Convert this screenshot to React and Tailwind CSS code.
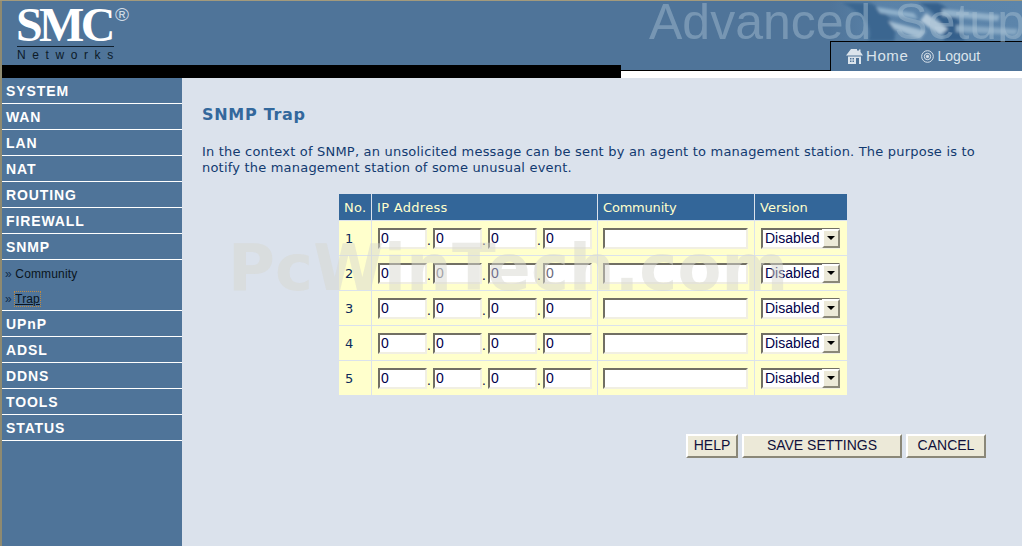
const menuTop = ["SYSTEM","WAN","LAN","NAT","ROUTING","FIREWALL","SNMP"];
const menuBottom = ["UPnP","ADSL","DDNS","TOOLS","STATUS"];
const sans = "font-['DejaVu_Sans',sans-serif]";
const inset = "border-2 border-t-[#716f64] border-l-[#716f64] border-b-[#f1efe2] border-r-[#f1efe2] bg-white";

function MenuItem({ label }) {
  return (
    <div className="h-[26px] border-b border-white pl-[4px] pt-[5px] text-[14px] leading-[16px] font-bold tracking-[0.9px] text-white font-['Liberation_Sans',sans-serif]">
      {label}
    </div>
  );
}

function Octet({ faded }) {
  return (
    <input
      readOnly
      defaultValue="0"
      className={`h-[21px] w-[49px] pl-[1px] text-[14px] leading-[17px] outline-none font-['Liberation_Sans',sans-serif] ${inset} ${faded ? "text-[#6a6a7a]" : "text-[#00004a]"}`}
    />
  );
}

function Dot() {
  return <span className="flex h-[22px] w-[6px] items-end text-[12px] leading-[15px] text-[#00004a]">.</span>;
}

function Row({ n, faded }) {
  return (
    <div className="grid h-[35px] grid-cols-[33px_226px_157px_92px] border-b border-[#dbe2ec] bg-[#ffffcc] text-[13px] text-[#0b2a5c]">
      <div className={`flex items-center border-r border-[#dbe2ec] pt-[1px] pl-[6px] ${sans}`}>{n}</div>
      <div className="flex items-center border-r border-[#dbe2ec] pl-[6px]">
        <Octet />
        <Dot />
        <Octet faded={faded} />
        <Dot />
        <Octet />
        <Dot />
        <Octet faded={faded} />
      </div>
      <div className="flex items-center border-r border-[#dbe2ec] pl-[5px]">
        <input readOnly className={`h-[21px] w-[145px] outline-none ${inset}`} />
      </div>
      <div className="flex items-center pl-[6px]">
        <div className={`flex h-[21px] w-[79px] items-center justify-between ${inset}`}>
          <span className="pl-[2px] text-[14px] leading-[17px] text-[#00004a] font-['Liberation_Sans',sans-serif]">Disabled</span>
          <span className="-mr-[2px] flex h-[19px] w-[18px] shrink-0 items-center justify-center border-2 border-t-white border-l-white border-r-[#8a8778] border-b-[#8a8778] bg-[#ece9d8]">
            <svg width="8" height="4" viewBox="0 0 8 4"><path d="M0 0h8L4 4z" fill="#000" /></svg>
          </span>
        </div>
      </div>
    </div>
  );
}

function Btn({ label, className }) {
  return (
    <button className={`h-[24px] border-2 border-t-white border-l-white border-r-[#8a8778] border-b-[#8a8778] bg-[#ece9d8] pb-[2px] text-[14px] leading-[16px] text-[#10103a] font-['Liberation_Sans',sans-serif] ${className}`}>
      {label}
    </button>
  );
}

function Photo() {
  return (
    <svg width="192" height="40" viewBox="0 0 192 40" className="block">
      <defs>
        <linearGradient id="fade" x1="0" x2="1" y1="0" y2="0">
          <stop offset="0" stopColor="#4f7499" />
          <stop offset="0.25" stopColor="#5a82a8" />
          <stop offset="1" stopColor="#5c85ab" />
        </linearGradient>
        <filter id="soft"><feGaussianBlur stdDeviation="1.4" /></filter>
      </defs>
      <rect width="192" height="40" fill="url(#fade)" />
      <g filter="url(#soft)">
        <path d="M12 2 C34 12 44 28 38 40 L64 40 C70 24 54 8 40 2z" fill="#3a6690" />
        <path d="M46 6 L84 12 L88 18 L50 12z" fill="#8fb0cb" />
        <path d="M58 20 L96 30 L90 38 L64 28z" fill="#a3bed3" />
        <path d="M88 2 C106 10 116 24 114 40 L134 40 C134 22 122 8 108 2z" fill="#34608c" />
        <path d="M112 8 L170 14 L168 20 L112 15z" fill="#92b1ca" />
        <path d="M126 24 L188 28 L186 34 L126 31z" fill="#88a9c4" />
        <path d="M96 12 L118 28 L110 34 L90 20z" fill="#b4c9da" />
      </g>
    </svg>
  );
}

export default function App() {
  return (
    <div className="relative flex h-[546px] w-[1022px] flex-col overflow-hidden border-t border-[#a39a7c] bg-[#dbe2ec] font-['DejaVu_Sans',sans-serif]">
      <header className="relative flex h-[77px] shrink-0">
        <div className="flex w-[621px] shrink-0 flex-col border-l-2 border-[#8f8a70]">
          <div className="relative h-[64px] bg-[#4f7499]">
            <div className="flex flex-col pl-[15px] pt-[3px]">
              <div className="flex items-start">
                <span className="-ml-px w-[99px] text-[48px] leading-[42px] font-bold tracking-[-3.6px] text-white font-['Liberation_Serif',serif]">SMC</span>
                <span className="pt-[1px] text-[19px] leading-[19px] text-[#cfdbe6] font-['Liberation_Sans',sans-serif]">®</span>
              </div>
              <div className="w-[97px] border-t border-[#10202f] pt-[1px] text-[12px] leading-[14px] tracking-[6.6px] whitespace-nowrap text-[#0c1a28] font-['Liberation_Sans',sans-serif]">Networks</div>
            </div>
          </div>
          <div className="h-[13px] bg-black" />
        </div>
        <div className="flex min-w-0 flex-1">
          <div className="flex w-[209px] shrink-0 flex-col">
            <div className="h-[70px] border-b border-black bg-[#4f7499]" />
            <div className="flex-1 bg-white" />
          </div>
          <div className="relative z-10 flex min-w-0 flex-1 flex-col">
            <div className="h-[40px] overflow-hidden"><Photo /></div>
            <div className="flex h-[30px] items-center gap-[13px] border-t border-l border-black bg-[#4f7499] pb-[1px] pl-[15px] text-[15px] leading-[18px] text-[#dbe4ec] font-['Liberation_Sans',sans-serif]">
              <span className="flex items-center gap-[3px] tracking-[0.6px]">
                <svg width="17" height="15" viewBox="0 0 17 15" fill="#dbe4ec">
                  <path d="M5 0H11V1.500H13V0.500H14.500V3L17 6.500H0zM2 7.500H15V15H2zM4 9V13H8V9zM10 9V15H13V9z" fillRule="evenodd" />
                  <path d="M6 9V13M4 11H8" stroke="#dbe4ec" strokeWidth="1" />
                </svg>
                Home
              </span>
              <span className="flex items-center gap-[3px] text-[14px]">
                <svg width="13" height="13" viewBox="0 0 13 13" fill="none" stroke="#dbe4ec">
                  <circle cx="6.500" cy="6.500" r="5.800" />
                  <circle cx="6.500" cy="6.500" r="3.200" />
                  <circle cx="6.500" cy="6.500" r="1.200" fill="#dbe4ec" />
                </svg>
                Logout
              </span>
            </div>
            <div className="flex-1 bg-white" />
          </div>
        </div>
        <span className="pointer-events-none absolute top-[-9px] left-[649px] z-20 h-[50px] overflow-hidden text-[50px] leading-[60px] [word-spacing:9px] whitespace-nowrap text-[#a9c0d3]/45 font-['Liberation_Sans',sans-serif]">Advanced Setup</span>
      </header>

      <div className="flex min-h-0 flex-1">
        <nav className="w-[182px] shrink-0 border-l-2 border-[#8f8a70] bg-[#4f7499]">
          {menuTop.map((m) => <MenuItem key={m} label={m} />)}
          <div className="h-[51px] border-b border-white pl-[3px] text-[12px] leading-[14px] tracking-[0.15px] text-[#0a1420] font-['Liberation_Sans',sans-serif]">
            <div className="pt-[7px]"><span className="text-[#0f2c4a]">» </span>Community</div>
            <div className="pt-[11px]"><span className="text-[#0f2c4a]">» </span><span className="underline outline-1 outline-dotted outline-[#c08a40]">Trap</span></div>
          </div>
          {menuBottom.map((m) => <MenuItem key={m} label={m} />)}
        </nav>

        <main className="flex min-w-0 flex-1 flex-col pl-[20px]">
          <h1 className="pt-[27px] text-[16px] leading-[20px] font-bold tracking-[0.7px] text-[#33689c]">SNMP Trap</h1>
          <p className="mt-[19px] w-[790px] text-[13px] leading-[16px] tracking-[0.2px] text-[#123a70]">
            In the context of SNMP, an unsolicited message can be sent by an agent to management station. The purpose is to notify the management station of some unusual event.
          </p>
          <div className="mt-[18px] ml-[137px] w-[508px]">
            <div className="grid h-[27px] grid-cols-[33px_226px_157px_92px] border-b border-[#dbe2ec] bg-[#336699] text-[13px] leading-[27px] text-[#ffffcc]">
              <div className="border-r border-[#dbe2ec] pl-[5px] tracking-[0.3px]">No.</div>
              <div className="border-r border-[#dbe2ec] pl-[5px] tracking-[0.3px]">IP Address</div>
              <div className="border-r border-[#dbe2ec] pl-[5px] tracking-[-0.2px]">Community</div>
              <div className="pl-[5px]">Version</div>
            </div>
            {[1,2,3,4,5].map((n) => <Row key={n} n={n} faded={n === 2} />)}
          </div>
          <div className="mt-[38px] ml-[484px] flex gap-[4px]">
            <Btn label="HELP" className="w-[52px]" />
            <Btn label="SAVE SETTINGS" className="w-[160px]" />
            <Btn label="CANCEL" className="w-[80px]" />
          </div>
        </main>
      </div>

      <span className="pointer-events-none absolute top-[231px] left-[228px] text-[64px] leading-[72px] font-bold tracking-[0.2px] whitespace-nowrap text-[#d8d8d0]/50">PcWinTech.com</span>
    </div>
  );
}
